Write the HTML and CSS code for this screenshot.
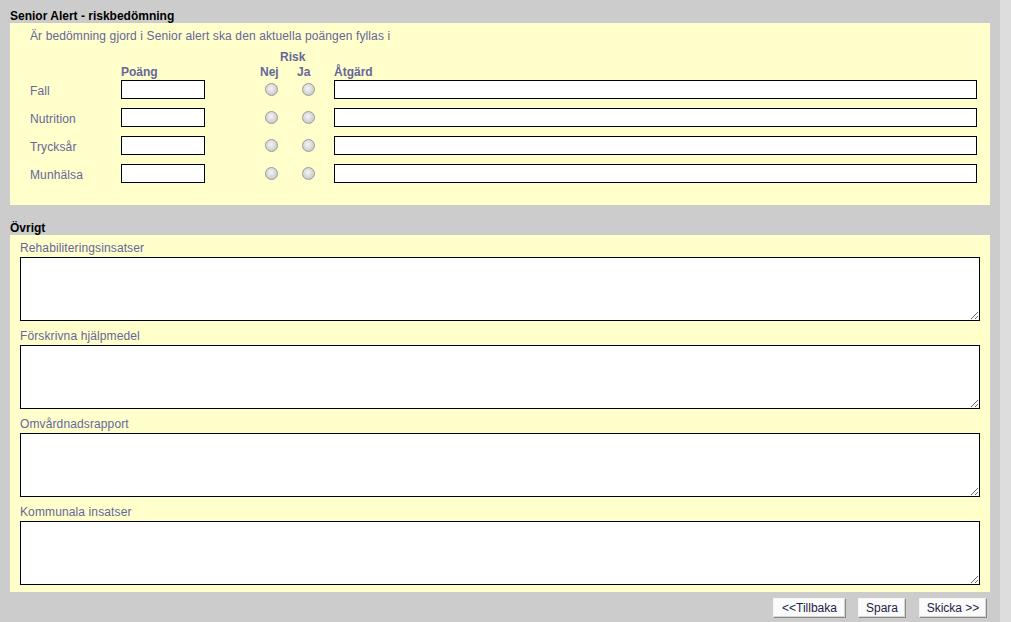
FILE: index.html
```html
<!DOCTYPE html>
<html lang="sv">
<head>
<meta charset="utf-8">
<title>Senior Alert</title>
<link rel="stylesheet" href="styles.css">
</head>
<body>
<div class="page">
  <h2 class="section-title">Senior Alert - riskbedömning</h2>
  <div class="panel panel-risk">
    <div class="intro">Är bedömning gjord i Senior alert ska den aktuella poängen fyllas i</div>
    <div class="risk-grid">
      <div class="risk-head"><span></span><span></span><span></span><span class="risk-label">Risk</span><span></span></div>
      <div class="col-head"><span></span><span class="h">Poäng</span><span></span><span class="h nej">Nej</span><span class="h ja">Ja</span><span class="h">Åtgärd</span></div>
      <div class="row"><span class="lbl">Fall</span><input class="points" type="text"><span></span><span class="c"><input class="radio" type="radio" name="r1"></span><span class="c cj"><input class="radio" type="radio" name="r1"></span><input class="action" type="text"></div>
      <div class="row"><span class="lbl">Nutrition</span><input class="points" type="text"><span></span><span class="c"><input class="radio" type="radio" name="r2"></span><span class="c cj"><input class="radio" type="radio" name="r2"></span><input class="action" type="text"></div>
      <div class="row"><span class="lbl">Trycksår</span><input class="points" type="text"><span></span><span class="c"><input class="radio" type="radio" name="r3"></span><span class="c cj"><input class="radio" type="radio" name="r3"></span><input class="action" type="text"></div>
      <div class="row"><span class="lbl">Munhälsa</span><input class="points" type="text"><span></span><span class="c"><input class="radio" type="radio" name="r4"></span><span class="c cj"><input class="radio" type="radio" name="r4"></span><input class="action" type="text"></div>
    </div>
  </div>

  <h2 class="section-title second">Övrigt</h2>
  <div class="panel panel-other">
    <label class="field-label">Rehabiliteringsinsatser</label>
    <textarea class="area"></textarea>
    <label class="field-label">Förskrivna hjälpmedel</label>
    <textarea class="area"></textarea>
    <label class="field-label">Omvårdnadsrapport</label>
    <textarea class="area"></textarea>
    <label class="field-label">Kommunala insatser</label>
    <textarea class="area"></textarea>
  </div>

  <div class="buttons">
    <button class="btn btn-back">&lt;&lt;Tillbaka</button>
    <button class="btn btn-save">Spara</button>
    <button class="btn btn-send">Skicka &gt;&gt;</button>
  </div>
</div>
</body>
</html>
```
FILE: styles.css
```css
html, body {
  margin: 0;
  padding: 0;
}
body {
  background: #dddddd;
  font-family: Arial, "Liberation Sans", sans-serif;
  font-size: 12px;
  line-height: 15px;
}
.page {
  width: 980px;
  padding: 0 10px;
  background: #cccccc;
  min-height: 622px;
  box-sizing: content-box;
}
.section-title {
  margin: 0;
  padding-top: 9px;
  height: 14px;
  font-size: 12px;
  line-height: 15px;
  font-weight: bold;
  color: #000;
}
.section-title.second {
  padding-top: 16px;
}
.panel {
  background: #ffffcc;
}
.panel-risk {
  padding: 6px 13px 13px 20px;
  height: 163px;
}
.intro {
  color: #666699;
  line-height: 15px;
  letter-spacing: 0.12px;
}
.risk-grid {
  margin-top: 6px;
}
.risk-head, .col-head, .row {
  display: grid;
  grid-template-columns: 91px 84px 53px 26px 50px 643px;
}
.risk-head {
  height: 15px;
}
.risk-label {
  grid-column: 4 / 6;
  color: #666699;
  font-weight: bold;
  padding-left: 22px;
}
.col-head {
  height: 15px;
}
.h {
  color: #666699;
  font-weight: bold;
}
.nej {
  padding-left: 2px;
}
.ja {
  padding-left: 13px;
}
.row {
  height: 28px;
  align-items: start;
}
.lbl {
  color: #666699;
  line-height: 19px;
  padding-top: 2px;
  letter-spacing: 0.12px;
}
.c {
  display: flex;
  justify-content: center;
}
.c.cj {
  justify-content: flex-start;
  padding-left: 18px;
}
.points, .action {
  box-sizing: border-box;
  height: 19px;
  margin: 0;
  border: 1px solid #000;
  background: #fff;
  padding: 1px 2px;
  font-family: Arial, "Liberation Sans", sans-serif;
  font-size: 12px;
  outline: none;
}
.points { width: 84px; }
.action { width: 643px; }
.radio {
  -webkit-appearance: none;
  appearance: none;
  width: 13px;
  height: 13px;
  margin: 3px 0 0 0;
  border-radius: 50%;
  border: 1px solid #9a9a9a;
  background: radial-gradient(circle at 45% 40%, #f4f4f4 0%, #dcdcdc 45%, #bcbcbc 100%);
  box-sizing: border-box;
}
.panel-other {
  padding: 5px 10px 7px 10px;
  display: flex;
  flex-direction: column;
}
.field-label {
  color: #666699;
  line-height: 15px;
  padding-top: 1px;
  margin-bottom: 1px;
  letter-spacing: 0.12px;
}
.area {
  box-sizing: border-box;
  width: 960px;
  height: 64px;
  margin: 0 0 7px 0;
  border: 1px solid #000;
  background: #fff;
  font-family: Arial, "Liberation Sans", sans-serif;
  font-size: 12px;
  resize: both;
  outline: none;
}
.area:last-child {
  margin-bottom: 0;
}
.buttons {
  display: flex;
  justify-content: flex-end;
  gap: 12px;
  padding: 6px 3px 0 0;
}
.btn {
  box-sizing: border-box;
  height: 20px;
  margin: 0;
  padding: 0;
  text-align: center;
  font-family: Arial, "Liberation Sans", sans-serif;
  font-size: 12px;
  line-height: 16px;
  color: #222244;
  background: #fbfbfb;
  border: 1px solid;
  border-color: #f4f4f4 #8a8a8a #8a8a8a #f4f4f4;
  box-shadow: inset -1px -1px 0 #d4d4d4;
  border-radius: 0;
}
.btn-back { width: 73px; }
.btn-save { width: 48px; }
.btn-send { width: 68px; margin-left: 1px; }
```
